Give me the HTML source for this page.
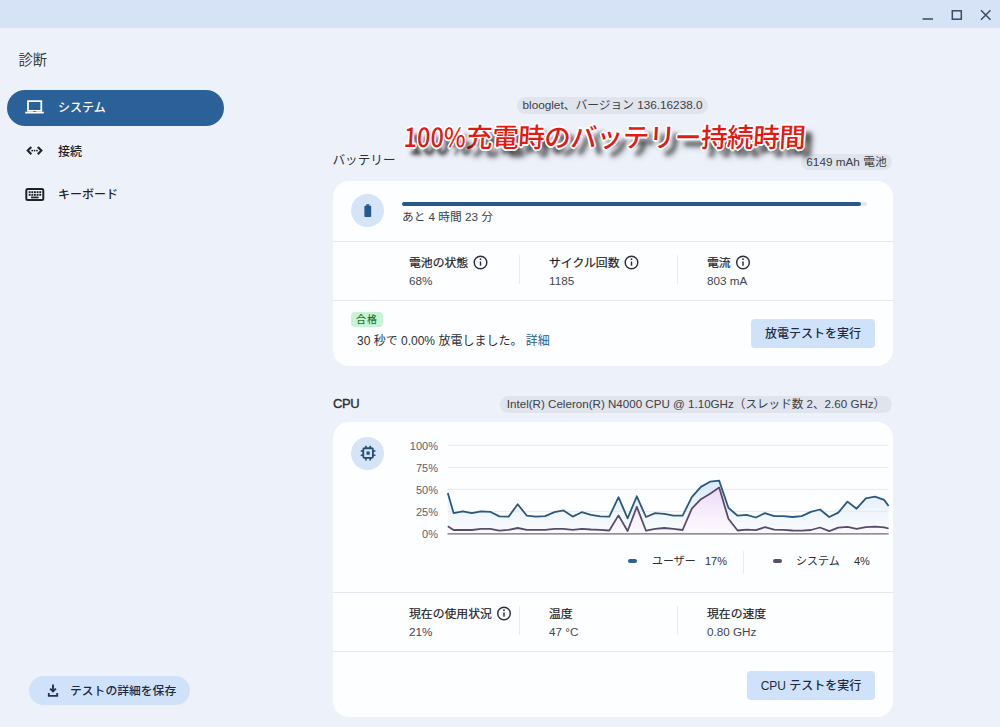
<!DOCTYPE html>
<html lang="ja"><head><meta charset="utf-8"><title>診断</title>
<style>
html,body{margin:0;padding:0}
body{width:1000px;height:727px;position:relative;overflow:hidden;background:#edf2fa;font-family:"Liberation Sans","Noto Sans CJK JP",sans-serif;color:#1f2328;font-size:13px}
.abs{position:absolute}
.t{position:absolute;white-space:nowrap;line-height:20px;height:20px}
.titlebar{left:0;top:0;width:1000px;height:28px;background:#d6e3f7}
.pill{left:7px;top:89.500px;width:217px;height:36px;border-radius:18px;background:#2a6198}
.card{background:#fdfeff;border-radius:16px;left:333px;width:560px}
.hr{position:absolute;left:333px;width:560px;height:1px;background:#e5e8ee}
.vr{position:absolute;width:1px;background:#e9ebf1}
.chip{position:absolute;height:16.500px;line-height:16.500px;border-radius:9px;background:#dfe4ed;color:#3c4043;font-size:11.75px;white-space:nowrap;text-align:center}
.lab{font-size:11.85px;color:#1f2328;font-weight:400;-webkit-text-stroke:.2px #1f2328}
.val{font-size:11.7px;color:#41464d}
.btn{position:absolute;background:#d0e2f9;border-radius:4px;color:#1b2b45;font-size:12px;font-weight:500;text-align:center;white-space:nowrap}
.circ{position:absolute;width:33px;height:33px;border-radius:50%;background:#d6e4f7}
.ylab{position:absolute;width:40px;text-align:right;font-size:11px;color:#5b6068;line-height:16px;height:16px;left:398px;margin-top:1px}
.ov{position:absolute;left:404px;top:118px;font-size:26.5px;line-height:36px;font-weight:500;letter-spacing:-0.4px;color:#e31a14;white-space:nowrap;font-family:"Noto Sans CJK JP","Liberation Sans",sans-serif;transform:skewX(-3.5deg);transform-origin:0 50%;
 text-shadow:-1.2px -1.2px 0 #fff,1.2px -1.2px 0 #fff,-1.2px 1.2px 0 #fff,1.2px 1.2px 0 #fff,0 -1.6px 0 #fff,0 1.6px 0 #fff,-1.6px 0 0 #fff,1.6px 0 0 #fff,0 0 2px #fff,7px 7px 4px rgba(0,0,0,.7),8px 8px 6px rgba(0,0,0,.5)}
.ov .n{display:inline-block;transform:scaleX(.88);transform-origin:0 50%;margin-right:-8px;letter-spacing:0}
</style></head><body>
<div class="abs titlebar"></div>
<svg class="abs" style="left:915px;top:4px" width="80" height="22" viewBox="915 4 80 22" fill="none" stroke="#3a4a66" stroke-width="1.5">
<line x1="922.5" y1="19" x2="933" y2="19"/>
<rect x="952.3" y="10.8" width="9" height="8.4"/>
<path d="M981 10.3 L990.5 19.7 M990.5 10.3 L981 19.7"/>
</svg>

<div class="t" style="left:18.500px;top:49.500px;font-size:14.3px;color:#3a3e45">診断</div>
<div class="abs pill"></div>
<svg class="abs" style="left:24px;top:97px" width="22" height="20" viewBox="0 0 22 20"><path d="M3.100 3.200h15.100v11.700H3.100z M4.900 5v8.100h11.500V5z M1.200 14.800h18.600v1.700H1.200z" fill="#fff" fill-rule="evenodd"/><rect x="9" y="13.900" width="3.200" height=".9" rx=".4" fill="#2a6198"/></svg>
<div class="t" style="left:58px;top:98px;color:#fff;font-weight:500;font-size:12px">システム</div>

<svg class="abs" style="left:24px;top:142px" width="22" height="20" viewBox="0 0 22 20" fill="none" stroke="#1f2328" stroke-width="2.1"><path d="M7.3 4.900 L3.700 8.600 L7.300 12.300"/><path d="M13.800 4.900 L17.400 8.600 L13.800 12.300"/><g fill="#1f2328" stroke="none"><circle cx="8.200" cy="8.600" r=".95"/><circle cx="10.550" cy="8.600" r=".95"/><circle cx="12.900" cy="8.600" r=".95"/></g></svg>
<div class="t" style="left:58px;top:142px;font-weight:500;font-size:12px">接続</div>

<svg class="abs" style="left:24px;top:185px" width="22" height="20" viewBox="0 0 22 20"><rect x="2.300" y="4.100" width="17" height="10.800" rx="1.500" fill="none" stroke="#1f2328" stroke-width="2"/><g fill="#1f2328"><rect x="4.70" y="6.2" width="1.9" height="1.9"/><rect x="7.35" y="6.2" width="1.9" height="1.9"/><rect x="10.00" y="6.2" width="1.9" height="1.9"/><rect x="12.65" y="6.2" width="1.9" height="1.9"/><rect x="15.30" y="6.2" width="1.9" height="1.9"/><rect x="4.70" y="8.9" width="1.9" height="1.9"/><rect x="7.35" y="8.9" width="1.9" height="1.9"/><rect x="10.00" y="8.9" width="1.9" height="1.9"/><rect x="12.65" y="8.9" width="1.9" height="1.9"/><rect x="15.30" y="8.9" width="1.9" height="1.9"/><rect x="7" y="11.600" width="7.600" height="1.700"/></g></svg>
<div class="t" style="left:58px;top:185px;font-weight:500;font-size:12px">キーボード</div>

<div class="btn" style="left:29px;top:676px;width:161px;height:29px;border-radius:15px"></div>
<svg class="abs" style="left:45px;top:683px" width="16" height="16" viewBox="0 0 16 16" fill="none" stroke="#1d3553" stroke-width="2"><path d="M8 1.400V8.400M5.100 5.600 8 8.500 10.900 5.600" stroke-width="1.900"/><path d="M3.800 10v2.900h8.400V10" stroke-width="1.800"/></svg>
<div class="t" style="left:70px;top:681px;color:#1b2b45;font-weight:500;font-size:11.8px">テストの詳細を保存</div>

<div class="chip" style="left:517px;top:97px;width:191px">blooglet、バージョン 136.16238.0</div>

<div class="t" style="left:332.500px;top:150.300px;font-size:12.6px;color:#2b2f36">バッテリー</div>
<div class="chip" style="left:801px;top:153.500px;width:91px">6149 mAh 電池</div>
<div class="abs card" style="top:181px;height:185px"></div>
<div class="circ" style="left:351px;top:194px"></div>
<svg class="abs" style="left:361px;top:203px" width="14" height="16" viewBox="0 0 14 16"><path d="M5.300 1.200h3v1.600h1.200c.4 0 .7.300.7.700v9.800c0 .4-.3.700-.7.700H4.100c-.4 0-.7-.3-.7-.7V3.500c0-.4.300-.7.700-.7h1.200z" fill="#25588c"/></svg>
<div class="abs" style="left:402px;top:202px;width:465px;height:3.6px;border-radius:2px;background:#dfe7f3"></div>
<div class="abs" style="left:402px;top:202px;width:459px;height:3.6px;border-radius:2px;background:#25588b"></div>
<div class="t val" style="left:402px;top:207px;color:#3c4043">あと 4 時間 23 分</div>
<div class="hr" style="top:241px"></div>
<div class="t lab" style="left:409px;top:253px">電池の状態</div>
<div class="t val" style="left:409px;top:271px">68%</div>
<div class="vr" style="left:519px;top:255px;height:29px"></div>
<div class="t lab" style="left:549px;top:253px">サイクル回数</div>
<div class="t val" style="left:549px;top:271px">1185</div>
<div class="vr" style="left:677px;top:255px;height:29px"></div>
<div class="t lab" style="left:707px;top:253px">電流</div>
<div class="t val" style="left:707px;top:271px">803 mA</div>
<div class="hr" style="top:300px"></div>
<div class="abs" style="left:351px;top:312px;width:32px;height:15px;line-height:15px;border-radius:4px;background:#c9f3d5;color:#167a3b;font-size:10px;text-align:center;font-weight:500;letter-spacing:1px">合格</div>
<div class="t" style="left:357px;top:331px;font-size:12px;color:#2b2f36">30 秒で 0.00% 放電しました。 <span style="color:#26598c">詳細</span></div>
<div class="btn" style="left:751px;top:319px;width:124px;height:29px;line-height:31px">放電テストを実行</div>

<div class="t" style="left:333px;top:394px;font-size:13px;color:#2b2f36;-webkit-text-stroke:.35px #2b2f36;letter-spacing:-.4px">CPU</div>
<div class="chip" style="left:500px;top:396px;width:392px;font-size:11.6px">Intel(R) Celeron(R) N4000 CPU @ 1.10GHz（スレッド数 2、2.60 GHz）</div>
<div class="abs card" style="top:422px;height:295px"></div>
<div class="circ" style="left:351px;top:437px"></div>
<svg class="abs" style="left:358.600px;top:444.400px" width="18.200" height="18.200" viewBox="0 0 17 17" fill="none" stroke="#234d78"><rect x="4" y="4" width="9" height="9" rx="1.2" stroke-width="1.7"/><rect x="7" y="7" width="3" height="3" fill="#234d78" stroke="none"/><path d="M6.5 1.6v2.4M10.500 1.600v2.400M6.500 13v2.400M10.500 13v2.400M1.600 6.500h2.400M1.600 10.500h2.400M13 6.500h2.400M13 10.500h2.400" stroke-width="1.5"/></svg>
<div class="ylab" style="top:437px">100%</div>
<div class="ylab" style="top:459px">75%</div>
<div class="ylab" style="top:481px">50%</div>
<div class="ylab" style="top:503px">25%</div>
<div class="ylab" style="top:525px">0%</div>
<svg class="abs" style="left:0;top:0" width="1000" height="727" viewBox="0 0 1000 727">
<defs><linearGradient id="gu" gradientUnits="userSpaceOnUse" x1="0" y1="478" x2="0" y2="534"><stop offset="0" stop-color="#cfe0f7" stop-opacity=".8"/><stop offset="1" stop-color="#e8f0fb" stop-opacity=".2"/></linearGradient>
<linearGradient id="gs" gradientUnits="userSpaceOnUse" x1="0" y1="486" x2="0" y2="534"><stop offset="0" stop-color="#ecd6f6" stop-opacity="1"/><stop offset="1" stop-color="#f8eefb" stop-opacity=".35"/></linearGradient></defs>
<line x1="447.5" x2="888.6" y1="445.3" y2="445.3" stroke="#e6e9ef" stroke-width="1"/><line x1="447.5" x2="888.6" y1="467.3" y2="467.3" stroke="#e6e9ef" stroke-width="1"/><line x1="447.5" x2="888.6" y1="489.3" y2="489.3" stroke="#e6e9ef" stroke-width="1"/><line x1="447.5" x2="888.6" y1="511.3" y2="511.3" stroke="#e6e9ef" stroke-width="1"/>
<path d="M447.8,533.3 L447.8,493.0 L453.6,513.1 L462.8,511.3 L471.9,513.1 L481.1,511.3 L490.2,511.8 L499.4,516.4 L508.6,516.6 L517.7,504.3 L526.9,515.7 L536.0,516.6 L545.2,516.1 L554.4,512.2 L563.5,510.4 L572.7,516.6 L581.8,512.2 L591.0,514.8 L600.2,516.3 L609.3,516.6 L618.5,497.2 L627.6,518.3 L636.8,496.3 L646.0,517.0 L655.1,513.1 L664.3,513.9 L673.4,515.7 L682.6,515.7 L691.8,497.2 L700.9,486.9 L710.1,481.7 L719.2,480.7 L728.4,507.8 L737.6,515.7 L746.7,514.8 L755.9,517.5 L765.0,513.1 L774.2,516.1 L783.4,516.1 L792.5,517.0 L801.7,516.1 L810.8,511.9 L820.0,509.5 L829.2,517.0 L838.3,512.6 L847.5,501.6 L856.6,508.7 L865.8,498.4 L875.0,496.7 L884.1,499.9 L888.6,506.0 L888.6,533.3 Z" fill="url(#gu)"/>
<path d="M447.8,533.3 L447.8,526.3 L453.6,530.0 L462.8,530.0 L471.9,530.0 L481.1,528.9 L490.2,528.9 L499.4,530.7 L508.6,529.8 L517.7,528.0 L526.9,529.8 L536.0,529.8 L545.2,529.8 L554.4,528.9 L563.5,528.9 L572.7,529.8 L581.8,528.9 L591.0,529.5 L600.2,529.8 L609.3,530.5 L618.5,515.4 L627.6,531.0 L636.8,506.9 L646.0,530.7 L655.1,528.9 L664.3,528.0 L673.4,528.9 L682.6,530.0 L691.8,508.7 L700.9,499.2 L710.1,493.7 L719.2,487.5 L728.4,518.8 L737.6,530.5 L746.7,529.6 L755.9,530.2 L765.0,527.1 L774.2,529.6 L783.4,529.8 L792.5,530.5 L801.7,530.7 L810.8,530.0 L820.0,527.5 L829.2,531.1 L838.3,527.6 L847.5,526.9 L856.6,528.9 L865.8,527.1 L875.0,526.7 L884.1,527.3 L888.6,528.5 L888.6,533.3 Z" fill="#fff"/>
<path d="M447.8,533.3 L447.8,526.3 L453.6,530.0 L462.8,530.0 L471.9,530.0 L481.1,528.9 L490.2,528.9 L499.4,530.7 L508.6,529.8 L517.7,528.0 L526.9,529.8 L536.0,529.8 L545.2,529.8 L554.4,528.9 L563.5,528.9 L572.7,529.8 L581.8,528.9 L591.0,529.5 L600.2,529.8 L609.3,530.5 L618.5,515.4 L627.6,531.0 L636.8,506.9 L646.0,530.7 L655.1,528.9 L664.3,528.0 L673.4,528.9 L682.6,530.0 L691.8,508.7 L700.9,499.2 L710.1,493.7 L719.2,487.5 L728.4,518.8 L737.6,530.5 L746.7,529.6 L755.9,530.2 L765.0,527.1 L774.2,529.6 L783.4,529.8 L792.5,530.5 L801.7,530.7 L810.8,530.0 L820.0,527.5 L829.2,531.1 L838.3,527.6 L847.5,526.9 L856.6,528.9 L865.8,527.1 L875.0,526.7 L884.1,527.3 L888.6,528.5 L888.6,533.3 Z" fill="url(#gs)"/>
<polyline points="447.8,493.0 453.6,513.1 462.8,511.3 471.9,513.1 481.1,511.3 490.2,511.8 499.4,516.4 508.6,516.6 517.7,504.3 526.9,515.7 536.0,516.6 545.2,516.1 554.4,512.2 563.5,510.4 572.7,516.6 581.8,512.2 591.0,514.8 600.2,516.3 609.3,516.6 618.5,497.2 627.6,518.3 636.8,496.3 646.0,517.0 655.1,513.1 664.3,513.9 673.4,515.7 682.6,515.7 691.8,497.2 700.9,486.9 710.1,481.7 719.2,480.7 728.4,507.8 737.6,515.7 746.7,514.8 755.9,517.5 765.0,513.1 774.2,516.1 783.4,516.1 792.5,517.0 801.7,516.1 810.8,511.9 820.0,509.5 829.2,517.0 838.3,512.6 847.5,501.6 856.6,508.7 865.8,498.4 875.0,496.7 884.1,499.9 888.6,506.0" fill="none" stroke="#2a587f" stroke-width="1.8" stroke-linejoin="round"/>
<polyline points="447.8,526.3 453.6,530.0 462.8,530.0 471.9,530.0 481.1,528.9 490.2,528.9 499.4,530.7 508.6,529.8 517.7,528.0 526.9,529.8 536.0,529.8 545.2,529.8 554.4,528.9 563.5,528.9 572.7,529.8 581.8,528.9 591.0,529.5 600.2,529.8 609.3,530.5 618.5,515.4 627.6,531.0 636.8,506.9 646.0,530.7 655.1,528.9 664.3,528.0 673.4,528.9 682.6,530.0 691.8,508.7 700.9,499.2 710.1,493.7 719.2,487.5 728.4,518.8 737.6,530.5 746.7,529.6 755.9,530.2 765.0,527.1 774.2,529.6 783.4,529.8 792.5,530.5 801.7,530.7 810.8,530.0 820.0,527.5 829.2,531.1 838.3,527.6 847.5,526.9 856.6,528.9 865.8,527.1 875.0,526.7 884.1,527.3 888.6,528.5" fill="none" stroke="#574b6c" stroke-width="1.8" stroke-linejoin="round"/>
<line x1="447.5" x2="888.6" y1="533.8" y2="533.8" stroke="#6b6b75" stroke-width="1.2"/>
</svg>
<div class="abs" style="left:628px;top:559px;width:9px;height:4px;border-radius:2px;background:#2a6198"></div>
<div class="t val" style="left:652px;top:551px;color:#2b2f36;font-size:11px">ユーザー</div>
<div class="t val" style="left:705px;top:551px;color:#2b2f36;font-size:11px">17%</div>
<div class="vr" style="left:743px;top:551px;height:23px"></div>
<div class="abs" style="left:773px;top:559px;width:9px;height:4px;border-radius:2px;background:#5a4f6e"></div>
<div class="t val" style="left:796px;top:551px;color:#2b2f36;font-size:11px">システム</div>
<div class="t val" style="left:854px;top:551px;color:#2b2f36;font-size:11px">4%</div>
<div class="hr" style="top:592px"></div>
<div class="t lab" style="left:409px;top:604px">現在の使用状況</div>
<div class="t val" style="left:409px;top:622px">21%</div>
<div class="vr" style="left:519px;top:606px;height:29px"></div>
<div class="t lab" style="left:549px;top:604px">温度</div>
<div class="t val" style="left:549px;top:622px">47 °C</div>
<div class="vr" style="left:677px;top:606px;height:29px"></div>
<div class="t lab" style="left:707px;top:604px">現在の速度</div>
<div class="t val" style="left:707px;top:622px">0.80 GHz</div>
<div class="hr" style="top:651px"></div>
<div class="btn" style="left:747px;top:671px;width:128px;height:29px;line-height:31px">CPU テストを実行</div>

<svg class="abs" style="left:0;top:0;pointer-events:none" width="1000" height="727" viewBox="0 0 1000 727" fill="none" stroke="#2b2f36" stroke-width="1.45">
<g id="i1"><circle cx="480.500" cy="262.5" r="6.300"/><path d="M480.500 261.5v4.200" stroke-width="1.500"/><circle cx="480.500" cy="259.200" r=".9" fill="#2b2f36" stroke="none"/></g>
<g><circle cx="631.500" cy="262.5" r="6.300"/><path d="M631.500 261.5v4.200" stroke-width="1.500"/><circle cx="631.500" cy="259.200" r=".9" fill="#2b2f36" stroke="none"/></g>
<g><circle cx="743" cy="262.5" r="6.300"/><path d="M743 261.5v4.200" stroke-width="1.500"/><circle cx="743" cy="259.200" r=".9" fill="#2b2f36" stroke="none"/></g>
<g><circle cx="504" cy="613.5" r="6.300"/><path d="M504 612.5v4.200" stroke-width="1.500"/><circle cx="504" cy="610.200" r=".9" fill="#2b2f36" stroke="none"/></g>
</svg>
<div class="ov"><span class="n">100%</span>充電時のバッテリー持続時間</div>
</body></html>
